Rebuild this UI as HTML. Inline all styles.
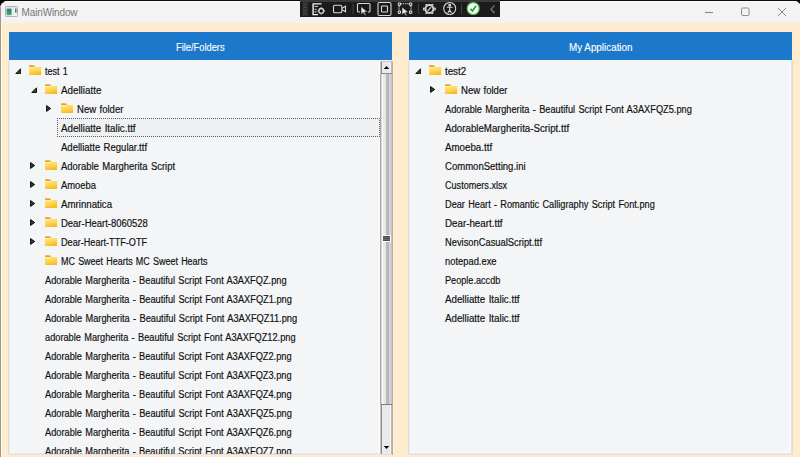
<!DOCTYPE html>
<html><head><meta charset="utf-8">
<style>
*{margin:0;padding:0;box-sizing:border-box}
html,body{width:800px;height:457px;overflow:hidden;background:#FFEBCD;font-family:"Liberation Sans",sans-serif;position:relative}
.ab{position:absolute}
.t{position:absolute;font-size:10px;color:#111;white-space:nowrap;line-height:12px;-webkit-text-stroke:0.18px #111;transform-origin:0 0;word-spacing:0.8px}
#top{position:absolute;left:0;top:0;width:800px;height:8px;background:#0b0b0b}
#win{position:absolute;left:0;top:1px;width:801px;height:460px;background:#F3F3F3;border-radius:8px 7px 0 0;overflow:hidden}
#beige{position:absolute;left:0;top:22px;width:801px;height:440px;background:#FFEBCD}
#title{position:absolute;left:0;top:0;width:801px;height:22px;background:#F3F3F3;border-top:1.2px solid #fdfdfd}
#lb{position:absolute;left:0;top:0;width:1px;height:460px;background:#A0978A}
#lb2{position:absolute;left:1px;top:21.7px;width:1px;height:440px;background:#FFFCE8}
.panel{position:absolute;top:32px;width:383px;height:422px;background:#F4F5F7;overflow:hidden}
.hdr{position:absolute;left:0;top:0;width:383px;height:28px;background:#1C78CA}
.ht{position:absolute;font-size:10px;color:#fff;white-space:nowrap;line-height:12px;-webkit-text-stroke:0.12px #fff;transform-origin:0 0}
#clip{position:absolute;left:9px;top:61px;width:383px;height:393px;overflow:hidden}
#clipR{position:absolute;left:409px;top:61px;width:383px;height:393px;overflow:hidden}
</style></head><body>
<svg width="0" height="0" style="position:absolute"><defs><linearGradient id="fg" x1="0" y1="0" x2="0.35" y2="1"><stop offset="0" stop-color="#FFE48C"/><stop offset="0.6" stop-color="#FFD356"/><stop offset="1" stop-color="#F8BC1E"/></linearGradient></defs></svg>
<div id="top"></div>
<div id="win">
<div id="beige"></div>
<div id="title">
  <svg class="ab" style="left:5px;top:3.8px" width="13" height="11" viewBox="0 0 13 11">
   <defs><linearGradient id="ig" x1="0" y1="0" x2="0" y2="1"><stop offset="0" stop-color="#2f6db5"/><stop offset="0.35" stop-color="#2e8a86"/><stop offset="1" stop-color="#3cb05a"/></linearGradient></defs>
   <rect x="0.5" y="0.5" width="12" height="10" rx="0.6" fill="#f4f4f4" stroke="#b4b4b4"/>
   <rect x="1.5" y="1.3" width="10" height="0.8" fill="#dcdcdc"/>
   <rect x="1.6" y="2.6" width="5" height="6.6" fill="url(#ig)"/>
   <rect x="10" y="2.6" width="1.6" height="4.2" fill="url(#ig)"/>
   <rect x="7.8" y="2.6" width="0.8" height="6.6" fill="#e0e0e0"/>
  </svg>
  <div class="ab" style="left:21.6px;top:4.5px;font-size:10px;line-height:12px;color:#767676;letter-spacing:-0.14px;white-space:nowrap">MainWindow</div>
</div>
<div id="lb"></div><div id="lb2"></div>
</div>
<div class="panel" style="left:9px"><div class="hdr"></div></div>
<div class="panel" style="left:409px"><div class="hdr"></div></div>
<div class="ht" style="left:176.3px;top:42px;transform:scaleX(0.93)">File/Folders</div>
<div class="ht" style="left:568.8px;top:42px;transform:scaleX(0.985)">My Application</div>

<div class="ab" style="left:8px;top:60px;width:1px;height:394px;background:#E2DDD4"></div>
<div class="ab" style="left:9px;top:60px;width:1px;height:394px;background:#E8EBF1"></div>
<div class="ab" style="left:10px;top:60px;width:1px;height:393px;background:#F8F9FA"></div>
<div class="ab" style="left:9px;top:453px;width:370px;height:1px;background:#E6E9EF"></div>
<div class="ab" style="left:9px;top:454px;width:384px;height:1px;background:#E8E0D2"></div>
<div class="ab" style="left:408px;top:60px;width:1px;height:394px;background:#E2DDD4"></div>
<div class="ab" style="left:409px;top:60px;width:1px;height:394px;background:#E8EBF1"></div>
<div class="ab" style="left:410px;top:60px;width:1px;height:393px;background:#F8F9FA"></div>
<div class="ab" style="left:790px;top:60px;width:1px;height:393px;background:#F8F9FA"></div>
<div class="ab" style="left:791px;top:60px;width:1px;height:394px;background:#E0E2EA"></div>
<div class="ab" style="left:792px;top:60px;width:1px;height:395px;background:#E2DACB"></div>
<div class="ab" style="left:409px;top:452px;width:382px;height:1px;background:#F8F9FA"></div>
<div class="ab" style="left:409px;top:453px;width:382px;height:1px;background:#E6E9EF"></div>
<div class="ab" style="left:409px;top:454px;width:384px;height:1px;background:#E8E0D2"></div>


<div class="ab" style="left:0;top:0;width:800px;height:454px;overflow:hidden">
<svg class="ab" style="left:14.9px;top:68.2px" width="7" height="7" viewBox="0 0 7 7"><path d="M5.5 0.8 V5.5 H0.8 Z" fill="#3a3a3a" stroke="#0a0a0a" stroke-width="0.9" stroke-linejoin="round"/></svg>
<svg class="ab" style="left:29px;top:65.0px" width="13" height="11" viewBox="0 0 13 11"><path d="M0 0.9 Q0 0.3 0.6 0.3 H4.4 Q4.9 0.3 5.3 0.8 L6.2 1.9 H0 Z" fill="#E8A516"/><rect x="0" y="1.9" width="12.1" height="8.2" rx="0.5" fill="url(#fg)"/><rect x="0.2" y="2.1" width="5.3" height="1.2" fill="#FFF0BE" opacity="0.85"/></svg>
<div class="t" style="left:45.1px;top:65.5px;transform:scaleX(0.9)">test 1</div>
<svg class="ab" style="left:30.700000000000003px;top:87.2px" width="7" height="7" viewBox="0 0 7 7"><path d="M5.5 0.8 V5.5 H0.8 Z" fill="#3a3a3a" stroke="#0a0a0a" stroke-width="0.9" stroke-linejoin="round"/></svg>
<svg class="ab" style="left:45px;top:84.0px" width="13" height="11" viewBox="0 0 13 11"><path d="M0 0.9 Q0 0.3 0.6 0.3 H4.4 Q4.9 0.3 5.3 0.8 L6.2 1.9 H0 Z" fill="#E8A516"/><rect x="0" y="1.9" width="12.1" height="8.2" rx="0.5" fill="url(#fg)"/><rect x="0.2" y="2.1" width="5.3" height="1.2" fill="#FFF0BE" opacity="0.85"/></svg>
<div class="t" style="left:61.1px;top:84.5px;transform:scaleX(0.9805)">Adelliatte</div>
<svg class="ab" style="left:46px;top:104.9px" width="7" height="8" viewBox="0 0 7 8"><path d="M0.6 0.6 L4.6 3.5 L0.6 6.4 Z" fill="#3a3a3a" stroke="#0a0a0a" stroke-width="1" stroke-linejoin="round"/></svg>
<svg class="ab" style="left:61px;top:103.0px" width="13" height="11" viewBox="0 0 13 11"><path d="M0 0.9 Q0 0.3 0.6 0.3 H4.4 Q4.9 0.3 5.3 0.8 L6.2 1.9 H0 Z" fill="#E8A516"/><rect x="0" y="1.9" width="12.1" height="8.2" rx="0.5" fill="url(#fg)"/><rect x="0.2" y="2.1" width="5.3" height="1.2" fill="#FFF0BE" opacity="0.85"/></svg>
<div class="t" style="left:77.1px;top:103.5px;transform:scaleX(0.954)">New folder</div>
<div class="t" style="left:61px;top:122.5px;transform:scaleX(0.9762)">Adelliatte Italic.ttf</div>
<div class="t" style="left:61px;top:141.5px;transform:scaleX(0.953)">Adelliatte Regular.ttf</div>
<svg class="ab" style="left:30px;top:161.9px" width="7" height="8" viewBox="0 0 7 8"><path d="M0.6 0.6 L4.6 3.5 L0.6 6.4 Z" fill="#3a3a3a" stroke="#0a0a0a" stroke-width="1" stroke-linejoin="round"/></svg>
<svg class="ab" style="left:45px;top:160.0px" width="13" height="11" viewBox="0 0 13 11"><path d="M0 0.9 Q0 0.3 0.6 0.3 H4.4 Q4.9 0.3 5.3 0.8 L6.2 1.9 H0 Z" fill="#E8A516"/><rect x="0" y="1.9" width="12.1" height="8.2" rx="0.5" fill="url(#fg)"/><rect x="0.2" y="2.1" width="5.3" height="1.2" fill="#FFF0BE" opacity="0.85"/></svg>
<div class="t" style="left:61.1px;top:160.5px;transform:scaleX(0.9463)">Adorable Margherita Script</div>
<svg class="ab" style="left:30px;top:180.9px" width="7" height="8" viewBox="0 0 7 8"><path d="M0.6 0.6 L4.6 3.5 L0.6 6.4 Z" fill="#3a3a3a" stroke="#0a0a0a" stroke-width="1" stroke-linejoin="round"/></svg>
<svg class="ab" style="left:45px;top:179.0px" width="13" height="11" viewBox="0 0 13 11"><path d="M0 0.9 Q0 0.3 0.6 0.3 H4.4 Q4.9 0.3 5.3 0.8 L6.2 1.9 H0 Z" fill="#E8A516"/><rect x="0" y="1.9" width="12.1" height="8.2" rx="0.5" fill="url(#fg)"/><rect x="0.2" y="2.1" width="5.3" height="1.2" fill="#FFF0BE" opacity="0.85"/></svg>
<div class="t" style="left:61.1px;top:179.5px;transform:scaleX(0.9413)">Amoeba</div>
<svg class="ab" style="left:30px;top:199.9px" width="7" height="8" viewBox="0 0 7 8"><path d="M0.6 0.6 L4.6 3.5 L0.6 6.4 Z" fill="#3a3a3a" stroke="#0a0a0a" stroke-width="1" stroke-linejoin="round"/></svg>
<svg class="ab" style="left:45px;top:198.0px" width="13" height="11" viewBox="0 0 13 11"><path d="M0 0.9 Q0 0.3 0.6 0.3 H4.4 Q4.9 0.3 5.3 0.8 L6.2 1.9 H0 Z" fill="#E8A516"/><rect x="0" y="1.9" width="12.1" height="8.2" rx="0.5" fill="url(#fg)"/><rect x="0.2" y="2.1" width="5.3" height="1.2" fill="#FFF0BE" opacity="0.85"/></svg>
<div class="t" style="left:61.1px;top:198.5px;transform:scaleX(0.9672)">Amrinnatica</div>
<svg class="ab" style="left:30px;top:218.9px" width="7" height="8" viewBox="0 0 7 8"><path d="M0.6 0.6 L4.6 3.5 L0.6 6.4 Z" fill="#3a3a3a" stroke="#0a0a0a" stroke-width="1" stroke-linejoin="round"/></svg>
<svg class="ab" style="left:45px;top:217.0px" width="13" height="11" viewBox="0 0 13 11"><path d="M0 0.9 Q0 0.3 0.6 0.3 H4.4 Q4.9 0.3 5.3 0.8 L6.2 1.9 H0 Z" fill="#E8A516"/><rect x="0" y="1.9" width="12.1" height="8.2" rx="0.5" fill="url(#fg)"/><rect x="0.2" y="2.1" width="5.3" height="1.2" fill="#FFF0BE" opacity="0.85"/></svg>
<div class="t" style="left:61.1px;top:217.5px;transform:scaleX(0.9471)">Dear-Heart-8060528</div>
<svg class="ab" style="left:30px;top:237.9px" width="7" height="8" viewBox="0 0 7 8"><path d="M0.6 0.6 L4.6 3.5 L0.6 6.4 Z" fill="#3a3a3a" stroke="#0a0a0a" stroke-width="1" stroke-linejoin="round"/></svg>
<svg class="ab" style="left:45px;top:236.0px" width="13" height="11" viewBox="0 0 13 11"><path d="M0 0.9 Q0 0.3 0.6 0.3 H4.4 Q4.9 0.3 5.3 0.8 L6.2 1.9 H0 Z" fill="#E8A516"/><rect x="0" y="1.9" width="12.1" height="8.2" rx="0.5" fill="url(#fg)"/><rect x="0.2" y="2.1" width="5.3" height="1.2" fill="#FFF0BE" opacity="0.85"/></svg>
<div class="t" style="left:61.1px;top:236.5px;transform:scaleX(0.911)">Dear-Heart-TTF-OTF</div>
<svg class="ab" style="left:45px;top:255.0px" width="13" height="11" viewBox="0 0 13 11"><path d="M0 0.9 Q0 0.3 0.6 0.3 H4.4 Q4.9 0.3 5.3 0.8 L6.2 1.9 H0 Z" fill="#E8A516"/><rect x="0" y="1.9" width="12.1" height="8.2" rx="0.5" fill="url(#fg)"/><rect x="0.2" y="2.1" width="5.3" height="1.2" fill="#FFF0BE" opacity="0.85"/></svg>
<div class="t" style="left:61.1px;top:255.5px;transform:scaleX(0.8963)">MC Sweet Hearts MC Sweet Hearts</div>
<div class="t" style="left:45px;top:274.5px;transform:scaleX(0.9234)">Adorable Margherita - Beautiful Script Font A3AXFQZ.png</div>
<div class="t" style="left:45px;top:293.5px;transform:scaleX(0.924)">Adorable Margherita - Beautiful Script Font A3AXFQZ1.png</div>
<div class="t" style="left:45px;top:312.5px;transform:scaleX(0.9271)">Adorable Margherita - Beautiful Script Font A3AXFQZ11.png</div>
<div class="t" style="left:45px;top:331.5px;transform:scaleX(0.9225)">adorable Margherita - Beautiful Script Font A3AXFQZ12.png</div>
<div class="t" style="left:45px;top:350.5px;transform:scaleX(0.9229)">Adorable Margherita - Beautiful Script Font A3AXFQZ2.png</div>
<div class="t" style="left:45px;top:369.5px;transform:scaleX(0.9229)">Adorable Margherita - Beautiful Script Font A3AXFQZ3.png</div>
<div class="t" style="left:45px;top:388.5px;transform:scaleX(0.9229)">Adorable Margherita - Beautiful Script Font A3AXFQZ4.png</div>
<div class="t" style="left:45px;top:407.5px;transform:scaleX(0.924)">Adorable Margherita - Beautiful Script Font A3AXFQZ5.png</div>
<div class="t" style="left:45px;top:426.5px;transform:scaleX(0.9229)">Adorable Margherita - Beautiful Script Font A3AXFQZ6.png</div>
<div class="t" style="left:45px;top:445.5px;transform:scaleX(0.9229)">Adorable Margherita - Beautiful Script Font A3AXFQZ7.png</div>
<svg class="ab" style="left:414.9px;top:68.2px" width="7" height="7" viewBox="0 0 7 7"><path d="M5.5 0.8 V5.5 H0.8 Z" fill="#3a3a3a" stroke="#0a0a0a" stroke-width="0.9" stroke-linejoin="round"/></svg>
<svg class="ab" style="left:429px;top:65.0px" width="13" height="11" viewBox="0 0 13 11"><path d="M0 0.9 Q0 0.3 0.6 0.3 H4.4 Q4.9 0.3 5.3 0.8 L6.2 1.9 H0 Z" fill="#E8A516"/><rect x="0" y="1.9" width="12.1" height="8.2" rx="0.5" fill="url(#fg)"/><rect x="0.2" y="2.1" width="5.3" height="1.2" fill="#FFF0BE" opacity="0.85"/></svg>
<div class="t" style="left:445.1px;top:65.5px;transform:scaleX(0.9721)">test2</div>
<svg class="ab" style="left:430px;top:85.9px" width="7" height="8" viewBox="0 0 7 8"><path d="M0.6 0.6 L4.6 3.5 L0.6 6.4 Z" fill="#3a3a3a" stroke="#0a0a0a" stroke-width="1" stroke-linejoin="round"/></svg>
<svg class="ab" style="left:445px;top:84.0px" width="13" height="11" viewBox="0 0 13 11"><path d="M0 0.9 Q0 0.3 0.6 0.3 H4.4 Q4.9 0.3 5.3 0.8 L6.2 1.9 H0 Z" fill="#E8A516"/><rect x="0" y="1.9" width="12.1" height="8.2" rx="0.5" fill="url(#fg)"/><rect x="0.2" y="2.1" width="5.3" height="1.2" fill="#FFF0BE" opacity="0.85"/></svg>
<div class="t" style="left:461.1px;top:84.5px;transform:scaleX(0.954)">New folder</div>
<div class="t" style="left:445px;top:103.5px;transform:scaleX(0.924)">Adorable Margherita - Beautiful Script Font A3AXFQZ5.png</div>
<div class="t" style="left:445px;top:122.5px;transform:scaleX(0.9706)">AdorableMargherita-Script.ttf</div>
<div class="t" style="left:445px;top:141.5px;transform:scaleX(0.9736)">Amoeba.ttf</div>
<div class="t" style="left:445px;top:160.5px;transform:scaleX(0.9537)">CommonSetting.ini</div>
<div class="t" style="left:445px;top:179.5px;transform:scaleX(0.9076)">Customers.xlsx</div>
<div class="t" style="left:445px;top:198.5px;transform:scaleX(0.919)">Dear Heart - Romantic Calligraphy Script Font.png</div>
<div class="t" style="left:445px;top:217.5px;transform:scaleX(0.9773)">Dear-heart.ttf</div>
<div class="t" style="left:445px;top:236.5px;transform:scaleX(0.9338)">NevisonCasualScript.ttf</div>
<div class="t" style="left:445px;top:255.5px;transform:scaleX(0.9364)">notepad.exe</div>
<div class="t" style="left:445px;top:274.5px;transform:scaleX(0.9124)">People.accdb</div>
<div class="t" style="left:445px;top:293.5px;transform:scaleX(0.9762)">Adelliatte Italic.ttf</div>
<div class="t" style="left:445px;top:312.5px;transform:scaleX(0.9762)">Adelliatte Italic.ttf</div>
</div>

<div class="ab" style="left:379px;top:61px;width:1px;height:393px;background:#FBFBFC"></div>
<div class="ab" style="left:380px;top:61px;width:13px;height:393px;background:#EAEAEA"></div>
<div class="ab" style="left:380px;top:61px;width:1px;height:393px;background:#C4C4C4"></div>
<div class="ab" style="left:381px;top:61px;width:1px;height:393px;background:#8C8C8C"></div>
<div class="ab" style="left:390px;top:61px;width:1px;height:393px;background:#F6F6F6"></div>
<div class="ab" style="left:391px;top:61px;width:1px;height:393px;background:#B9B9BD"></div>
<div class="ab" style="left:392px;top:61px;width:1px;height:394px;background:#B8AE9E"></div>
<div class="ab" style="left:393px;top:61px;width:1px;height:394px;background:#FFF6DA"></div>
<div class="ab" style="left:380px;top:61px;width:13px;height:1px;background:#CFC6BA"></div>
<div class="ab" style="left:381px;top:73px;width:11px;height:1px;background:#8a8a8a"></div>
<svg class="ab" style="left:383px;top:65px" width="7" height="5" viewBox="0 0 7 5"><path d="M0.8 4 L3.5 1 L6.2 4Z" fill="#000"/></svg>
<div class="ab" style="left:380px;top:74px;width:12px;height:331px;background:linear-gradient(90deg,#A9A9A9 0,#A9A9A9 1px,#D6D6D6 1px,#D6D6D6 2px,#FBFBFB 2px,#FBFBFB 3px,#EAEAEA 3px,#E6E6E6 6px,#BBBBBB 6px,#B5B5B5 9px,#CDCDCD 9px,#DEDEDE 10px,#C2C5CB 11px,#C2C5CB 12px)"></div>
<div class="ab" style="left:381px;top:404px;width:11px;height:1px;background:#7e7e7e"></div>
<div class="ab" style="left:382.5px;top:235px;width:8.5px;height:7px;background:#fff"></div>
<div class="ab" style="left:383px;top:236px;width:7px;height:5px;background:repeating-linear-gradient(180deg,#4e4e4e 0,#4e4e4e 1px,#6a6a6a 1px,#6a6a6a 2px)"></div>
<svg class="ab" style="left:383px;top:445px" width="7" height="5" viewBox="0 0 7 5"><path d="M0.8 1 L3.5 4 L6.2 1Z" fill="#000"/></svg>
<div class="ab" style="left:57px;top:118px;width:323px;height:18.5px;border:1px dotted #606060;background:rgba(0,0,0,0.018)"></div>

<div class="ab" style="left:300px;top:0;width:200px;height:17px;background:#1B1B1B"></div>
<div class="ab" style="left:300px;top:0;width:200px;height:1.5px;background:#3a3a3a"></div>
<svg class="ab" style="left:300px;top:0" width="200" height="17" viewBox="0 0 200 17" fill="none" stroke="#d8d8d8" stroke-width="1.1">
 <g fill="#6e6e6e" stroke="none">
  <rect x="2.6" y="2.5" width="1" height="1"/><rect x="4.6" y="2.5" width="1" height="1"/><rect x="6.6" y="2.5" width="1" height="1"/>
  <rect x="3.6" y="4" width="1" height="1"/><rect x="5.6" y="4" width="1" height="1"/>
  <rect x="2.6" y="5.5" width="1" height="1"/><rect x="4.6" y="5.5" width="1" height="1"/><rect x="6.6" y="5.5" width="1" height="1"/>
  <rect x="3.6" y="7" width="1" height="1"/><rect x="5.6" y="7" width="1" height="1"/>
  <rect x="2.6" y="8.5" width="1" height="1"/><rect x="4.6" y="8.5" width="1" height="1"/><rect x="6.6" y="8.5" width="1" height="1"/>
  <rect x="3.6" y="10" width="1" height="1"/><rect x="5.6" y="10" width="1" height="1"/>
  <rect x="2.6" y="11.5" width="1" height="1"/><rect x="4.6" y="11.5" width="1" height="1"/><rect x="6.6" y="11.5" width="1" height="1"/>
  <rect x="3.6" y="13" width="1" height="1"/><rect x="5.6" y="13" width="1" height="1"/>
  <rect x="2.6" y="14.5" width="1" height="1"/><rect x="4.6" y="14.5" width="1" height="1"/><rect x="6.6" y="14.5" width="1" height="1"/>
 </g>
 <path d="M21.6 3.9 H13.1 V14.6 H18" stroke="#f0f0f0" stroke-width="1.4"/><path d="M14.5 6.4 H18 M14.5 9.3 H16.6 M14.5 11.8 H16.6" stroke-width="1"/>
 <circle cx="21.2" cy="10.9" r="2.4" fill="#1b1b1b" stroke-width="1.3"/><path d="M21.2 7.3 V8.2 M21.2 13.6 V14.5 M17.6 10.9 H18.5 M23.9 10.9 H24.8" stroke-width="1.2"/><circle cx="21.2" cy="10.9" r="0.9" fill="#111" stroke="none"/>
 <rect x="33.5" y="5.3" width="8.3" height="7.4" rx="1.3"/><path d="M42 8.2 L45.5 6.2 V11.8 L42 9.8"/>
 <path d="M53 3.5 V14" stroke="#3e3e3e"/>
 <path d="M60 12 H58.5 Q57.5 12 57.5 11 V4.5 Q57.5 3.5 58.5 3.5 H69 Q70 3.5 70 4.5 V11 Q70 12 69 12 H68"/>
 <path d="M61 6.5 L61 14.5 L63 12.5 L65 15.5 L66 15 L64.5 12 L67.5 12 Z" fill="#e8e8e8" stroke="#1b1b1b" stroke-width="0.6"/>
 <rect x="78" y="2.5" width="13" height="13" rx="1.5"/><rect x="81.5" y="6" width="6" height="6" rx="0.8"/>
 <path d="M100.5 3.8 H109.5 M99 6 V11 M111 6 V11" stroke-dasharray="1.4 0.8"/>
 <rect x="98.2" y="3" width="2.4" height="2.4" rx="0.8"/><rect x="109.4" y="3" width="2.4" height="2.4" rx="0.8"/><rect x="98.2" y="11" width="2.4" height="2.4" rx="0.8"/><rect x="109.4" y="11" width="2.4" height="2.4" rx="0.8"/>
 <path d="M102 7 L102 15 L104 13 L106 16 L107 15.5 L105.5 12.5 L108.5 12.5 Z" fill="#e8e8e8" stroke="#1b1b1b" stroke-width="0.6"/>
 <path d="M118.5 3.5 V14" stroke="#3e3e3e"/>
 <circle cx="129.4" cy="9" r="4" stroke-width="2" stroke="#d0d0d0"/>
 <g fill="#d0d0d0" stroke="none"><rect x="123" y="7.6" width="1.6" height="2.8"/><rect x="134.2" y="7.6" width="1.6" height="2.8"/><rect x="125.4" y="4" width="2" height="1.4"/><rect x="131.4" y="4" width="2" height="1.4"/><rect x="125.4" y="12.6" width="2" height="1.4"/><rect x="131.4" y="12.6" width="2" height="1.4"/></g>
 <path d="M127.6 10.8 L131.2 7.2" stroke-width="1.2"/>
 <circle cx="149.7" cy="8.5" r="6"/><circle cx="149.7" cy="5.3" r="0.9" fill="#d8d8d8"/><path d="M146.8 7.3 H152.6 M149.7 7.3 V10 L147.8 13 M149.7 10 L151.6 13"/>
 <path d="M161.5 3.5 V14" stroke="#3e3e3e"/>
 <circle cx="173.2" cy="8.5" r="5.9" fill="#f6fff6" stroke="#6cc06c" stroke-width="1.3"/><path d="M170.4 8.8 L172.4 11 L176.1 5.9" stroke="#1a9a1a" stroke-width="1.6"/>
 <path d="M194.5 5.5 L191 9.3 L194.5 13" stroke="#8a8a8a"/>
</svg>


<svg class="ab" style="left:700px;top:3px" width="95" height="18" viewBox="0 0 95 18" fill="none" stroke="#8c8c8c" stroke-width="1">
 <path d="M5 9.5 H13" stroke-width="1.2"/>
 <rect x="41.5" y="5" width="7.5" height="7.5" rx="1.2"/>
 <path d="M78 5 L86 13 M86 5 L78 13"/>
</svg>

</body></html>
